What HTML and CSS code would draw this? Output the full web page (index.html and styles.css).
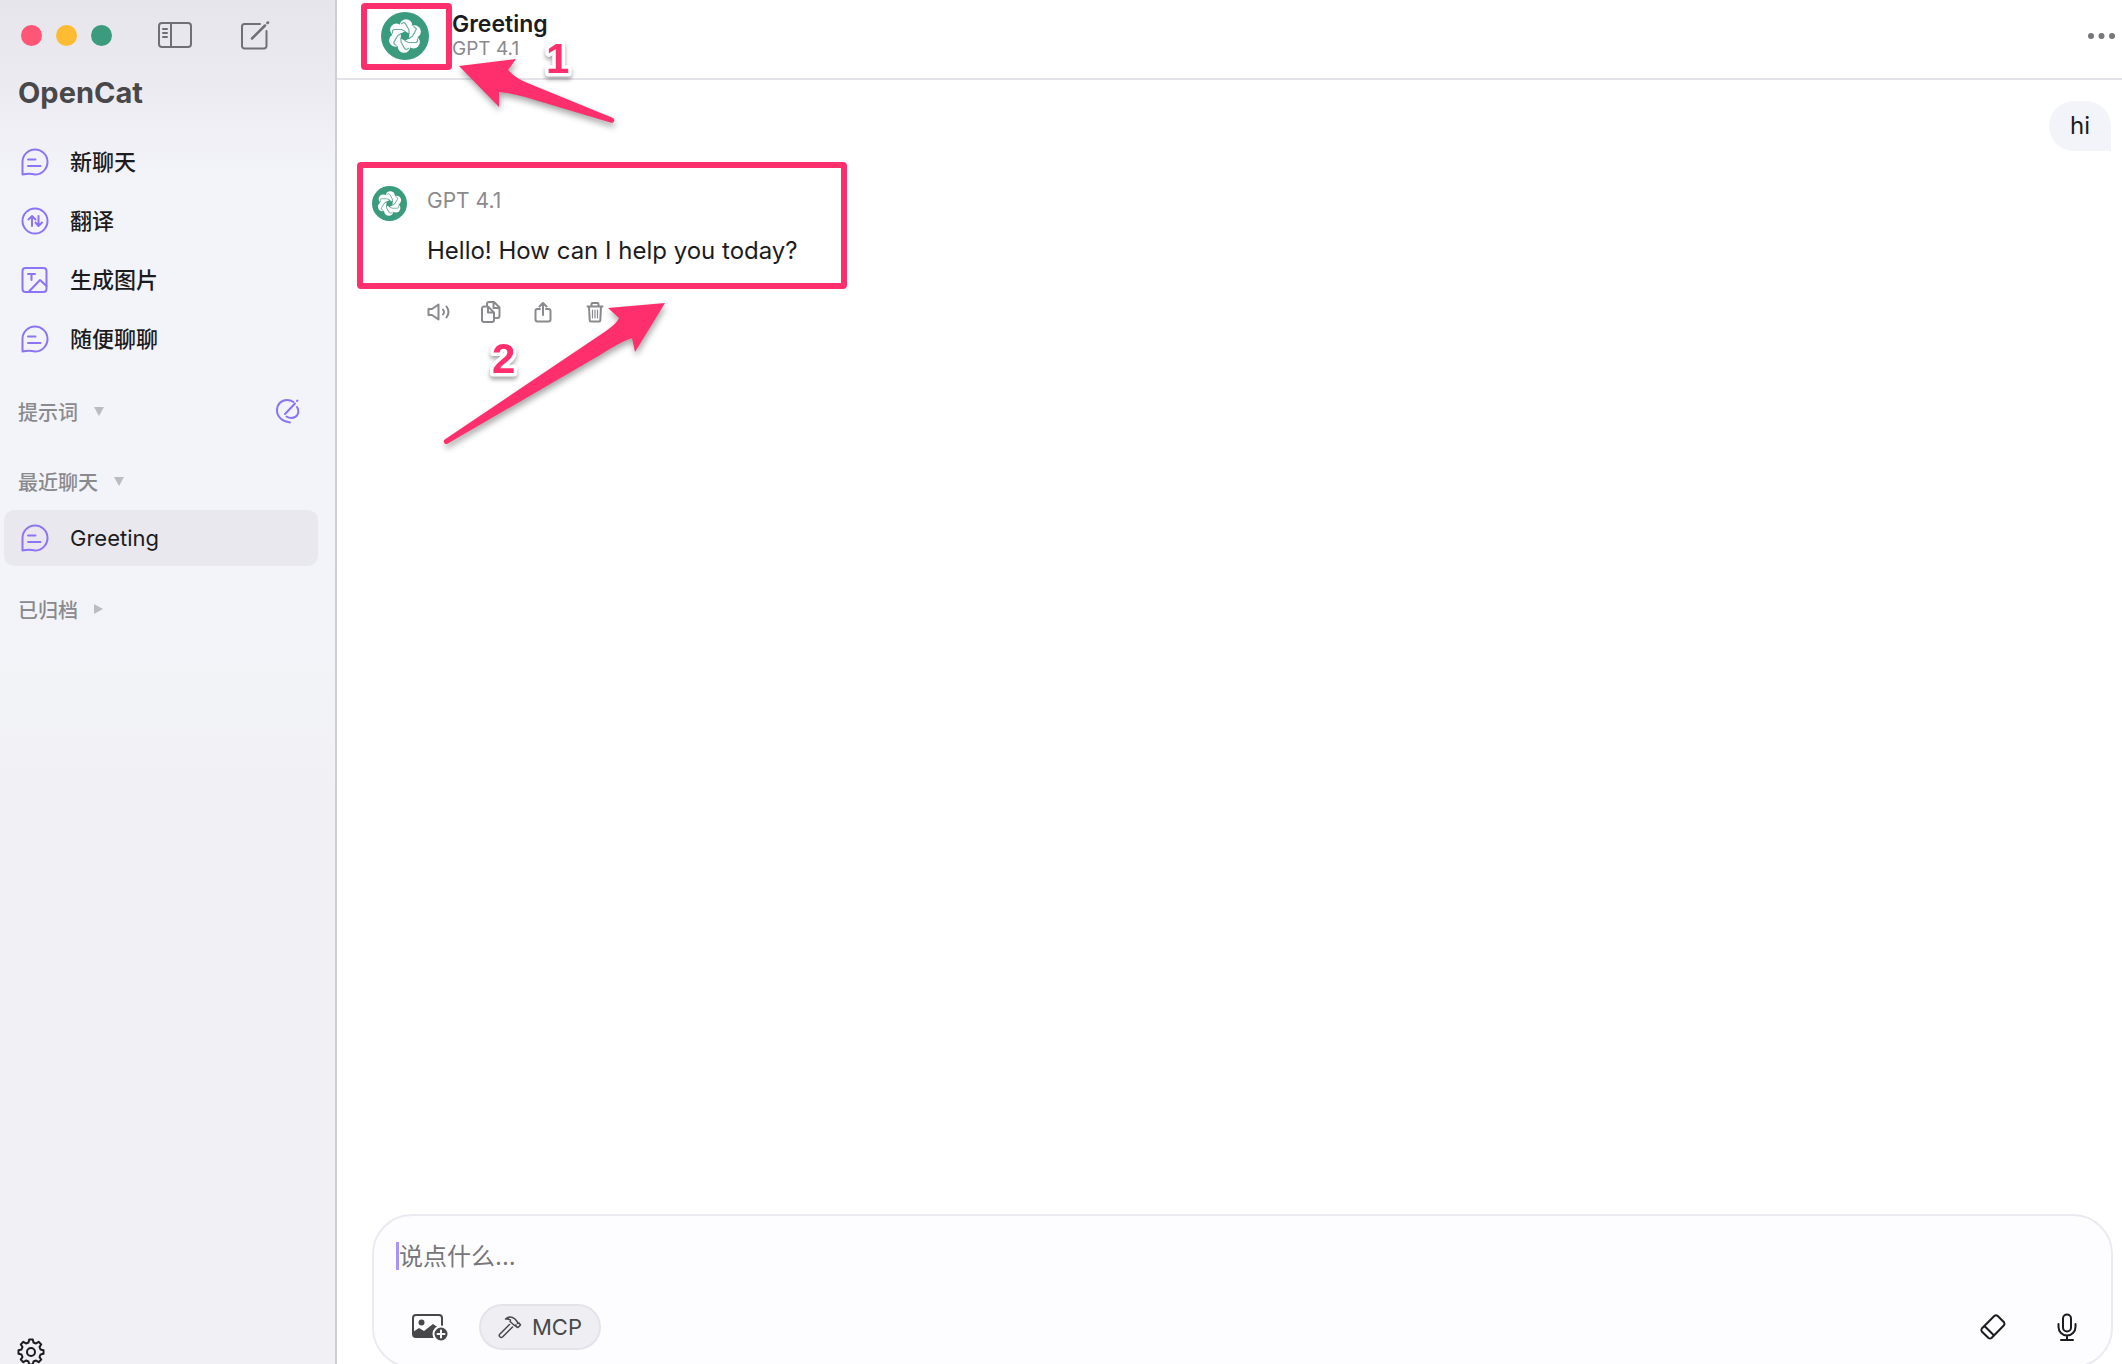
FILE: index.html
```
<!DOCTYPE html>
<html lang="zh-CN">
<head>
  <meta charset="UTF-8" />
  <title>OpenCat</title>
  <meta name="viewport" content="width=device-width, initial-scale=1.0"/>
  <link rel="stylesheet" href="styles.css">
</head>
<body>

<!-- shared icons -->
<svg class="sprite" aria-hidden="true">
  <symbol id="chat" viewBox="0 0 28 28">
    <path d="M1.5 26.5V14a12.5 12.5 0 1 1 12.5 12.5c-2 0-4-.8-6-.8-2 0-4 .8-6.500.8z"/>
    <path d="M7 11.500h7.500M7 18h12.500"/>
  </symbol>
  <symbol id="logo" viewBox="-24 -24 48 48">
    <circle r="24" fill="#3a9c7c"/>
    <g fill="#fff">
      <circle r="12"/>
      <circle cx="1" cy="-10.500" r="6.300"/>
      <circle cx="9.600" cy="-4.400" r="6.300"/>
      <circle cx="8.600" cy="6.100" r="6.300"/>
      <circle cx="-1" cy="10.500" r="6.300"/>
      <circle cx="-9.600" cy="4.400" r="6.300"/>
      <circle cx="-8.600" cy="-6.100" r="6.300"/>
    </g>
    <path id="strand" d="M-12.500 -3V-4.500Q-12.500 -6.500 -10.500 -6.500H-3.500L0 -4.800" fill="none" stroke="#6fae9a" stroke-width="1.200"/>
    <use href="#strand" transform="rotate(60)"/>
    <use href="#strand" transform="rotate(120)"/>
    <use href="#strand" transform="rotate(180)"/>
    <use href="#strand" transform="rotate(240)"/>
    <use href="#strand" transform="rotate(300)"/>
    <path d="M0 -4.800L4.200 -2.400V2.400L0 4.800L-4.200 2.400V-2.400z" fill="#3a9c7c"/>
  </symbol>
</svg>

<div class="app">
  <aside class="sidebar">
    <div class="toolbar">
      <div class="lights"><i class="red"></i><i class="yellow"></i><i class="green"></i></div>
      <button class="tool" aria-label="侧边栏">
        <svg width="34" height="26" viewBox="0 0 34 26"><rect x="1" y="1" width="32" height="24" rx="3"/><path d="M13 1v24M5 7h4M5 11h4M5 15h4"/></svg>
      </button>
      <button class="tool compose" aria-label="新建">
        <svg width="30" height="30" viewBox="0 0 30 30"><path d="M20 4H4.500A2.500 2.500 0 0 0 2 6.500V26a2.500 2.500 0 0 0 2.500 2.500H24a2.500 2.500 0 0 0 2.500-2.500V11"/><path d="M12 18.500L25 5.500M27.500 3L28 2.500" stroke-width="2.500"/></svg>
      </button>
    </div>
    <h1>OpenCat</h1>

    <nav class="menu">
      <a href="#"><svg class="icon"><use href="#chat"/></svg>新聊天</a>
      <a href="#"><svg class="icon" viewBox="0 0 28 28"><circle cx="14" cy="14" r="12.500"/><path d="M11 19V9M7.500 12.500L11 9l3.500 3.500M17.500 9v10M14.500 15.500l3 3.500 3.500-3.500"/></svg>翻译</a>
      <a href="#"><svg class="icon" viewBox="0 0 28 28"><rect x="1.500" y="2" width="24" height="24" rx="3"/><path d="M7 8h7M10.500 8v6M8 25.500L19 14l6.500 6"/></svg>生成图片</a>
      <a href="#"><svg class="icon"><use href="#chat"/></svg>随便聊聊</a>
    </nav>

    <div class="section">
      <button>提示词 <i class="down"></i></button>
      <button class="edit" aria-label="编辑提示词">
        <svg width="26" height="26" viewBox="0 0 26 26"><path d="M15 24.500C7 23.500 2 18.500 2 12.500 2 6 6.500 2 12 2c2.500 0 4.500.5 6.500 2M10 16L20 5.500M22 3l.5-.5M22 9c3.500 6-.5 11-5.500 11-3 0-5-1.500-5-1.500"/></svg>
      </button>
    </div>
    <div class="section recent"><button>最近聊天 <i class="down"></i></button></div>
    <a class="current" href="#"><svg class="icon"><use href="#chat"/></svg>Greeting</a>
    <div class="section archived"><button>已归档 <i class="right"></i></button></div>

    <button class="settings" aria-label="设置">
      <svg width="28" height="28" viewBox="-14 -14 28 28"><circle r="4"/><path d="M-2.500 -9.500L-1.800 -12.500H1.800L2.500 -9.500L5 -8.500L7.600 -10.200L10.200 -7.600L8.500 -5L9.500 -2.500L12.500 -1.800V1.800L9.500 2.500L8.500 5L10.200 7.600L7.600 10.200L5 8.500L2.500 9.500L1.800 12.500H-1.800L-2.500 9.500L-5 8.500L-7.600 10.200L-10.200 7.600L-8.500 5L-9.500 2.500L-12.500 1.800V-1.800L-9.500 -2.500L-8.500 -5L-10.200 -7.600L-7.600 -10.200L-5 -8.500z"/></svg>
    </button>
  </aside>

  <main class="main">
    <header class="header">
      <svg class="avatar-lg"><use href="#logo"/></svg>
      <div class="heading">
        <h2>Greeting</h2>
        <p>GPT 4.1</p>
      </div>
      <button class="more" aria-label="更多">
        <svg width="28" height="8" viewBox="0 0 28 8"><circle cx="3" cy="4" r="3"/><circle cx="13.500" cy="4" r="3"/><circle cx="24" cy="4" r="3"/></svg>
      </button>
    </header>

    <section class="messages">
      <div class="bubble">hi</div>
      <article class="reply">
        <svg class="avatar-sm"><use href="#logo"/></svg>
        <div>
          <p class="model">GPT 4.1</p>
          <p class="text">Hello! How can I help you today?</p>
          <div class="actions">
            <button aria-label="朗读"><svg viewBox="0 0 24 24"><path d="M1.500 9v6h3.500l6.500 4.500v-15L5 9zM16 9.500q2 2.500 0 5M19.500 6.500q4 5.500 0 11"/></svg></button>
            <button aria-label="复制"><svg viewBox="0 0 24 24"><path d="M3 8.500a2 2 0 0 1 2-2h4l6 6V20a2 2 0 0 1-2 2H5a2 2 0 0 1-2-2zM9 6.500v6h6M8 6V4a2 2 0 0 1 2-2h5l5.500 5.500V16a2 2 0 0 1-2 2H15.500M14.500 2v6h6"/></svg></button>
            <button aria-label="分享"><svg viewBox="0 0 24 24"><path d="M9 9H6.500a2 2 0 0 0-2 2v8.500a2 2 0 0 0 2 2h11a2 2 0 0 0 2-2V11a2 2 0 0 0-2-2H15M12 15V3M8.500 6.500L12 3l3.500 3.500"/></svg></button>
            <button aria-label="删除"><svg viewBox="0 0 24 24"><path d="M4.500 6.500h15M8.500 6V4a1 1 0 0 1 1-1h5a1 1 0 0 1 1 1v2M6 7l.7 13a1.500 1.500 0 0 0 1.500 1.500h7.600a1.500 1.500 0 0 0 1.500-1.500l.7-13"/><path d="M9.500 10v8M12 10v8M14.500 10v8" stroke-width="1.200"/></svg></button>
          </div>
        </div>
      </article>
    </section>

    <form class="composer">
      <input type="text" placeholder="说点什么..." aria-label="说点什么">
      <div class="controls">
        <button type="button" aria-label="添加图片">
          <svg width="36" height="28" viewBox="0 0 36 28"><rect x="1" y="2" width="29" height="22" rx="3" fill="none" stroke="#48484a" stroke-width="2"/><circle cx="9.500" cy="9.500" r="3"/><path d="M1 19l6-4 5 3 9-7 9 6v7H2z"/><circle cx="29" cy="21" r="7.500" stroke="#fdfdff" stroke-width="2"/><path d="M25.500 21h7M29 17.500v7" stroke="#fff" stroke-width="2"/></svg>
        </button>
        <button type="button" class="mcp">
          <svg width="24" height="24" viewBox="0 0 24 24"><path d="M11.500 9.500L1.500 19.500q-.8 1.500.5 2.500t2.500 0L14.500 12M7.500 4q4.500-4 9.500 0l2.500 3v1.500l1.500-.5 1.500 2-2.500 2.500-2-1v-1.500l-1.500.5-4.500-4 .5-1.500q-2-1.500-5-1z"/></svg>
          MCP
        </button>
        <button type="button" class="erase" aria-label="清除">
          <svg width="28" height="28" viewBox="0 0 28 28"><path d="M2.800 15.500L15.500 2.800q1.500-1 3 0l6.500 6.500q1 1.500 0 3L12.500 25q-1.500 1-3 0L2.800 18.500q-1-1.500 0-3zM5.500 13l9.500 9.500"/></svg>
        </button>
        <button type="button" aria-label="语音">
          <svg width="28" height="28" viewBox="0 0 28 28"><rect x="10" y="1.500" width="8" height="17" rx="4"/><path d="M5.500 11v3a8.500 8.500 0 0 0 17 0v-3M14 22.500V27M8 27h12"/></svg>
        </button>
      </div>
    </form>
  </main>

  <!-- step markers drawn over the window -->
  <svg class="notes" width="900" height="460" viewBox="0 0 900 460">
    <rect x="364" y="6" width="85" height="61" rx="1"/>
    <rect x="360" y="165" width="484" height="121" rx="1"/>
    <g class="arrows">
      <path d="M459 66L516 59L508 70Q516 79 530 84L613 118Q616 121 612 123L525 97Q510 93 499 92L499 107z"/>
      <path d="M665 303L608 308L619 318Q617 324 600 335L444 440Q443 444 447 444L600 355Q620 342 632 338L635 352z"/>
    </g>
    <text x="546" y="73">1</text>
    <text x="492" y="373">2</text>
  </svg>
</div>

</body>
</html>
```
FILE: styles.css
```
* {
  box-sizing: border-box;
}

body {
  margin: 0;
  font-family: Inter, "Noto Sans CJK SC", sans-serif;
  font-size: 22px;
  color: #1c1c1e;
  background: #fff;
}

h1, h2, p {
  margin: 0;
}

button {
  border: 0;
  padding: 0;
  background: none;
  font: inherit;
  color: inherit;
  display: flex;
  align-items: center;
}

a {
  color: inherit;
  text-decoration: none;
}

svg {
  display: block;
  flex: none;
  fill: none;
  stroke-linecap: round;
  stroke-linejoin: round;
}

.sprite {
  position: absolute;
  width: 0;
  height: 0;
}

.app {
  position: relative;
  display: flex;
  height: 100vh;
  overflow: hidden;
}

/* sidebar */
.sidebar {
  width: 337px;
  flex: none;
  display: flex;
  flex-direction: column;
  border-right: 2px solid #cfcfd3;
  background: linear-gradient(#e6e5eb 0, #ebeaf0 80px, #f3f4fa 180px, #f3f4fa 560px, #f1f1f5 800px, #f1f1f5 100%);
}

.toolbar {
  display: flex;
  align-items: center;
  height: 70px;
  padding-left: 21px;
}

.lights {
  display: flex;
  gap: 14px;
  margin-right: 46px;
}

.lights i {
  width: 21px;
  height: 21px;
  border-radius: 50%;
}

.red { background: #ff5577; }
.yellow { background: #ffbc32; }
.green { background: #3a9c7c; }

.tool svg {
  stroke: #707074;
  stroke-width: 2;
}

.compose {
  margin-left: 48px;
}

h1 {
  padding-left: 18px;
  font-size: 29px;
  line-height: 46px;
  color: #48484a;
}

.menu {
  padding-top: 16px;
}

.menu a, .current {
  display: flex;
  align-items: center;
  gap: 21px;
  height: 59px;
  padding-left: 21px;
}

.menu a {
  font-weight: 500;
  line-height: 28px;
}

.icon {
  width: 28px;
  height: 28px;
  stroke: #8c73f8;
  stroke-width: 2;
}

.section {
  display: flex;
  align-items: center;
  justify-content: space-between;
  height: 30px;
  margin-top: 28px;
  padding: 0 34px 0 18px;
  font-size: 20px;
  font-weight: 500;
  color: #8a8a8e;
}

.section button {
  gap: 16px;
}

.section i {
  border: 5px solid transparent;
}

.section .down {
  border-top: 9px solid #bbbbc0;
  border-bottom: 0;
}

.section .right {
  border-left: 9px solid #bbbbc0;
  border-right: 0;
}

.edit svg {
  stroke: #8c73f8;
  stroke-width: 2;
}

.recent {
  margin-top: 40px;
}

.current {
  height: 56px;
  margin: 14px 17px 0 4px;
  padding-left: 17px;
  border-radius: 10px;
  background: #e9e8ee;
}

.settings {
  margin: auto 0 -2px 17px;
}

.settings svg {
  stroke: #1c1c1e;
  stroke-width: 2;
}

/* main column */
.main {
  flex: 1;
  min-width: 0;
  display: flex;
  flex-direction: column;
}

.header {
  display: flex;
  align-items: center;
  height: 80px;
  padding: 0 6px 6px 44px;
  border-bottom: 2px solid #e4e3ea;
}

.avatar-lg {
  width: 48px;
  height: 48px;
  margin-right: 23px;
}

h2 {
  font-size: 23px;
  line-height: 26px;
  font-weight: 600;
}

.heading p {
  font-size: 19px;
  line-height: 24px;
  color: #8a8a8e;
}

.more {
  margin-left: auto;
}

.more svg {
  fill: #77777b;
}

.messages {
  flex: 1;
  display: flex;
  flex-direction: column;
  padding: 21px 11px 0 35px;
}

.bubble {
  align-self: flex-end;
  padding: 0 21px;
  line-height: 50px;
  font-size: 24px;
  border-radius: 25px 25px 0 25px;
  background: #f3f4fa;
}

.reply {
  display: flex;
  align-items: flex-start;
  gap: 20px;
  margin-top: 35px;
}

.avatar-sm {
  width: 35px;
  height: 35px;
}

.model {
  font-size: 21px;
  line-height: 30px;
  color: #8a8a8e;
}

.text {
  margin-top: 18px;
  font-size: 24px;
  line-height: 34px;
}

.actions {
  display: flex;
  gap: 28px;
  margin-top: 32px;
}

.actions svg {
  width: 24px;
  height: 24px;
  stroke: #8a8a8e;
  stroke-width: 2;
}

/* message box */
.composer {
  height: 154px;
  margin: 0 9px -4px 35px;
  padding: 26px 30px 0 22px;
  border: 2px solid #ebeaf2;
  border-radius: 40px;
  background: #fdfdff;
}

/* the left border stands in for the caret */
.composer input {
  display: block;
  width: 100%;
  height: 28px;
  padding: 0;
  border: 0;
  border-left: 3px solid #a594f9;
  outline: 0;
  background: none;
  font: inherit;
  font-size: 24px;
  caret-color: #8c73f8;
}

.composer input::placeholder {
  color: #77777b;
}

.controls {
  display: flex;
  align-items: center;
  margin-top: 34px;
  padding-left: 16px;
  color: #48484a;
}

.controls svg {
  fill: #48484a;
}

.controls .mcp {
  gap: 10px;
  height: 46px;
  margin-left: 31px;
  padding: 0 17px;
  border: 2px solid #e4e3ea;
  border-radius: 23px;
  background: #efeef3;
}

.controls .mcp svg {
  fill: none;
  stroke: #48484a;
  stroke-width: 1.5;
}

.erase {
  margin-left: auto;
  margin-right: 46px;
}

.controls .erase svg, .erase + button svg {
  fill: none;
  stroke: #1c1c1e;
  stroke-width: 2;
}

/* markers */
.notes {
  position: absolute;
  top: 0;
  left: 0;
  pointer-events: none;
}

.notes rect {
  stroke: #ff2f6d;
  stroke-width: 6;
}

.arrows {
  fill: #ff2f6d;
  filter: drop-shadow(1px 4px 3px rgba(0,0,0,0.35));
}

.notes text {
  font-family: "Liberation Sans", sans-serif;
  font-size: 42px;
  font-weight: bold;
  fill: #ff2f6d;
  stroke: #fff;
  stroke-width: 7;
  paint-order: stroke;
  filter: drop-shadow(0 3px 2px rgba(0,0,0,0.35));
}
```
